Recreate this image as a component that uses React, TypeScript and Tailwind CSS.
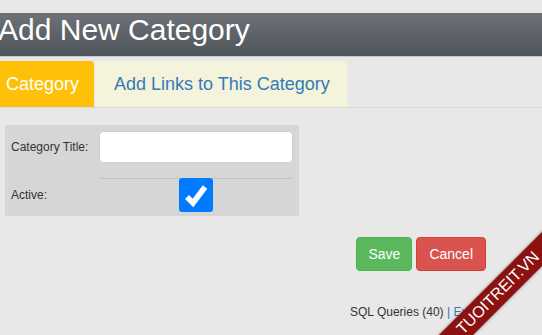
import React from "react";

export default function App() {
  return (
    <div className="relative h-[335px] w-[542px] overflow-hidden bg-[#e8e8e8] font-['Liberation_Sans',Arial,sans-serif] text-[#333]">
      <div className="h-[13px]" />

      {/* page title bar */}
      <div className="h-[44px] border-b border-[#c8c8c8] bg-gradient-to-b from-[#6e7178] to-[#4f535a]">
        <h1 className="-ml-[2px] text-[30px] leading-[34px] text-white">Add New Category</h1>
      </div>

      {/* tabs */}
      <div className="mt-[4px] flex h-[47px] border-b border-[#d9d9d9]">
        <div className="flex h-[46px] w-[94px] items-center rounded-tr-[4px] bg-[#ffc107] pl-[6px] text-[18px] text-white">
          Category
        </div>
        <div className="ml-[1px] flex h-[46px] w-[252px] items-center rounded-t-[4px] bg-[#f4f4dc] pl-[19px] text-[18px] text-[#337ab7]">
          Add Links to This Category
        </div>
      </div>

      {/* form */}
      <div className="ml-[5px] mt-[17px] flex h-[91px] w-[294px] flex-col bg-[#d6d6d6] text-[12px]">
        <div className="flex h-[53px] items-start pt-[6px]">
          <label className="flex h-[32px] w-[94px] items-center pl-[6px]">Category Title:</label>
          <input
            type="text"
            className="h-[32px] w-[194px] rounded-[4px] border border-[#cfcfcf] bg-white px-2 outline-none"
          />
        </div>
        <div className="flex">
          <label className="flex h-[34px] w-[94px] items-center pl-[6px]">Active:</label>
          <div className="flex w-[194px] justify-center border-t border-[#c2c2c2]">
            <div className="-mt-[1px] flex h-[34px] w-[34px] items-center justify-center rounded-[3px] bg-[#007bff]">
              <svg width="34" height="34" viewBox="0 0 34 34">
                <polyline
                  points="8,19 14,25 26,9"
                  fill="none"
                  stroke="white"
                  strokeWidth="5.5"
                  strokeLinejoin="miter"
                />
              </svg>
            </div>
          </div>
        </div>
      </div>

      {/* actions */}
      <div className="mt-[21px] flex justify-end gap-[4px] pr-[56px]">
        <button className="h-[34px] rounded-[4px] border border-[#4cae4c] bg-[#5cb85c] px-[11px] text-[14px] text-white">
          Save
        </button>
        <button className="h-[34px] rounded-[4px] border border-[#d43f3a] bg-[#d9534f] px-[12px] text-[14px] text-white">
          Cancel
        </button>
      </div>

      <div className="mt-[34px] pl-[350px] text-[12px] leading-[14px]">
        SQL Queries (40) <span className="text-[#337ab7]">| Explain</span>
      </div>

      {/* watermark ribbon */}
      <div className="absolute left-[348px] top-[281px] flex h-[24px] w-[300px] -rotate-45 items-center justify-center bg-[#8c1111] text-[16px] leading-none text-white shadow-[0_0_3px_rgba(0,0,0,0.5)]">
        TUOITREIT.VN
      </div>
    </div>
  );
}
